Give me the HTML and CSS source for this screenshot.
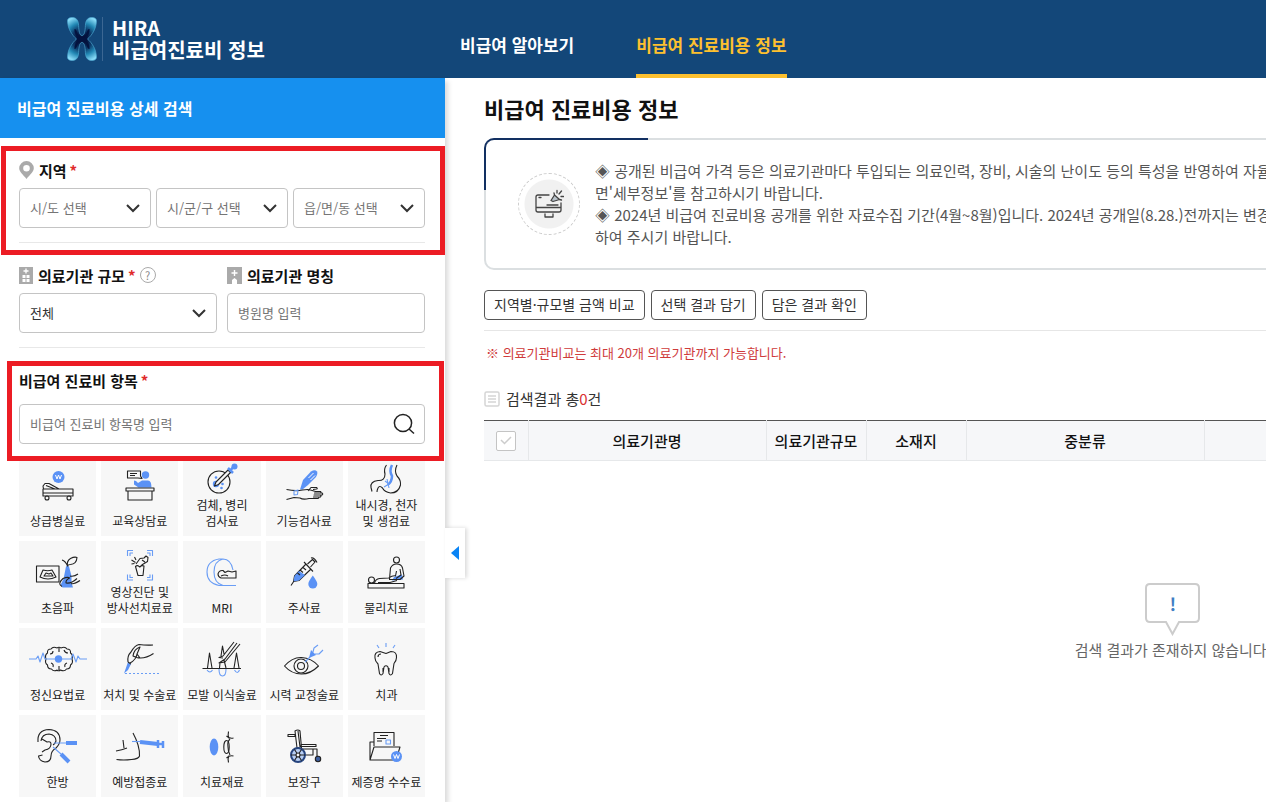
FILE: index.html
```html
<!DOCTYPE html>
<html lang="ko">
<head>
    <meta charset="UTF-8">
    <meta name="viewport" content="width=device-width, initial-scale=1.0">
    <title>비급여 진료비용 정보</title>
    <link rel="stylesheet" href="styles.css">
</head>
<body>
    <header class="header">
        <a class="brand" href="#">
            <svg class="brand-mark" width="30" height="44" viewBox="0 0 30 44" aria-hidden="true">
                <defs>
                    <radialGradient id="mark" gradientUnits="userSpaceOnUse" cx="15" cy="22" r="23">
                        <stop offset="0.2" stop-color="#04133f"/>
                        <stop offset="0.45" stop-color="#0d3a6a"/>
                        <stop offset="0.7" stop-color="#2187b4"/>
                        <stop offset="1" stop-color="#8adcf8"/>
                    </radialGradient>
                </defs>
                <path fill="url(#mark)" stroke="#4aa5cf" stroke-width="0.700" d="M.6 5C0 1 3 .4 6 .6c4 .4 5.400 3.400 5.600 8 .2 5 .8 10 3.400 10s3.200-5 3.400-10c.2-4.600 1.600-7.600 5.600-8 3-.2 6 .4 5.400 4.400C29 12 25 18 20.500 22c4.500 4 8.500 10 8.900 17 .6 4-2.400 4.600-5.400 4.400-4-.4-5.400-3.400-5.600-8-.2-5-.8-10-3.400-10s-3.200 5-3.400 10c-.2 4.600-1.600 7.600-5.600 8-3 .2-6-.4-5.400-4.400C1 32 5 26 9.500 22 5 18 1 12 .6 5z"/>
                <path fill="#04133f" d="M7.500 12c2-.5 3 5 5 8.500h5c2-3.500 3-9 5-8.500.5 3.500-1.500 7-4 10 2.500 3 4.500 6.500 4 10-2 .5-3-5-5-8.500h-5c-2 3.500-3 9-5 8.500-.5-3.500 1.500-7 4-10-2.500-3-4.500-6.500-4-10z"/>
            </svg>
            <span class="brand-name">HIRA<br>비급여진료비 정보</span>
        </a>
        <nav class="nav">
            <a class="nav-link" href="#">비급여 알아보기</a>
            <a class="nav-link active" href="#">비급여 진료비용 정보</a>
        </nav>
    </header>

    <div class="layout">
        <aside class="sidebar">
            <h2 class="sidebar-title">비급여 진료비용 상세 검색</h2>
            <form class="search-form">
                <div class="group">
                    <div class="label-row">
                        <svg class="label-icon" width="15" height="18" viewBox="0 0 15 18"><path fill="#aaa" fill-rule="evenodd" d="M7.500 0A7.300 7.300 0 0 0 .2 7.300C.2 11 4 13.500 7.500 18c3.500-4.500 7.300-7 7.300-10.700A7.300 7.300 0 0 0 7.500 0zm0 4a3.300 3.300 0 1 1 0 6.600 3.300 3.300 0 0 1 0-6.600z"/></svg>
                        <label for="sido">지역</label><span class="required">*</span>
                    </div>
                    <div class="fields fields-3">
                        <select id="sido"><option>시/도 선택</option></select>
                        <select id="sigungu" aria-label="시/군/구"><option>시/군/구 선택</option></select>
                        <select id="dong" aria-label="읍/면/동"><option>읍/면/동 선택</option></select>
                    </div>
                </div>

                <div class="group fields fields-2">
                    <div>
                        <div class="label-row">
                            <svg class="label-icon" width="14" height="17" viewBox="0 0 14 17"><path fill="#aaa" d="M0 0h14v17H0z"/><path stroke="#fff" stroke-width="1.300" d="M7 1.500v5M4.500 4h5"/><path fill="#fff" d="M3.500 8h3v3h-3zm4 0h3v3h-3zm-4 4h3v3h-3zm4 0h3v3h-3z"/></svg>
                            <label for="size">의료기관 규모</label><span class="required">*</span>
                            <button class="help" type="button" aria-label="도움말">?</button>
                        </div>
                        <select id="size" class="filled"><option>전체</option></select>
                    </div>
                    <div>
                        <div class="label-row">
                            <svg class="label-icon" width="15" height="17" viewBox="0 0 15 17"><path fill="#aaa" d="M0 0h15v17h-5v-4l-2.500-2L5 13v4H0z"/><path stroke="#fff" stroke-width="1.400" d="M7.500 3v6M4.500 6h6"/></svg>
                            <label for="hospital">의료기관 명칭</label>
                        </div>
                        <input id="hospital" type="text" placeholder="병원명 입력">
                    </div>
                </div>

                <div class="group group-item">
                    <div class="label-row">
                        <label for="item">비급여 진료비 항목</label><span class="required">*</span>
                    </div>
                    <div class="search-box">
                        <input id="item" type="text" placeholder="비급여 진료비 항목명 입력">
                        <button class="search-button" type="submit" aria-label="검색">
                            <svg width="22" height="22" viewBox="0 0 22 22" fill="none" stroke="#222" stroke-width="1.500"><circle cx="10" cy="10" r="8.600"/><path d="M16 16l5 4.500"/></svg>
                        </button>
                    </div>
                </div>
            </form>

            <div class="tiles">
                <button class="tile" type="button">
                    <svg class="icon" viewBox="0 0 60 36"><circle class="blue" cx="30.500" cy="12" r="6"/><path class="white-line" d="M27.500 10l1.500 4 1.500-4 1.500 4 1.500-4"/><path d="M15 24h30v7H15zM15 28h30M15.500 24l-.5-3 2-2.500h4l10 5.500M18 20.500l9 3.500"/><circle cx="19" cy="33" r="2"/><circle cx="41" cy="33" r="2"/></svg>
                    <span>상급병실료</span>
                </button>
                <button class="tile" type="button">
                    <svg class="icon" viewBox="0 0 60 36"><circle class="blue" cx="35.500" cy="10" r="3.700"/><path class="blue" d="M24 15.500l2 .5 2 2 4-2.500h6q3.500 0 3.500 7h-13l-4.500-3z"/><path d="M17.500 6h13v5l1.500 2.500-4-.5H17.500zM20 8.500h7M20 10.500h5M16 23h28v3H16zM18 26v9h24v-9"/></svg>
                    <span>교육상담료</span>
                </button>
                <button class="tile two-line" type="button">
                    <svg class="icon" viewBox="0 0 60 36"><circle cx="27" cy="23" r="11"/><circle class="blue" cx="24" cy="25" r="3.200"/><circle class="blue" cx="24" cy="18.500" r="1.300"/><circle class="blue" cx="30.500" cy="25" r="1.300"/><circle class="blue" cx="29.500" cy="29" r="1.300"/><path class="paper" d="M22.500 27L24 23l12-12 2.500 2.500-12 12z"/><path class="blue-thick" d="M36 9l5 5M38.500 11.500l3-4"/><circle class="blue" cx="42.500" cy="7.500" r="3"/></svg>
                    <span>검체, 병리<br>검사료</span>
                </button>
                <button class="tile" type="button">
                    <svg class="icon" viewBox="0 0 60 36"><path class="blue" d="M26 24.500l3-9.500 8-8.500q4-2.500 6 0 1 2-1 5.500L34 20l-5.500 4.500z"/><path class="white-line" d="M34.500 13l5-5M36.500 15l4.500-4.500"/><path d="M12.500 24.500q9 2 16 .5 6-1 8 0l5 1.500h5q1 1 0 1.500h-6 7.500q1.500 1 0 2h-8 6.500q1 1 0 2h-7 5q1 1-.5 1.500h-9q-6 1.500-9-.5l-6-.5-7.500 2M34 26l3-3.500h5.500q1.500 1 0 1.500l-3.500.5"/><path class="blue-line" d="M20 26l4-1-.5 4.500-3.500.5z"/></svg>
                    <span>기능검사료</span>
                </button>
                <button class="tile two-line" type="button">
                    <svg class="icon" viewBox="0 0 60 36"><path d="M30.500 6q-3 4-1.500 9 0 7-7 6.500-8 1-7 7l1 4M41 6q-3 6 0 11 4 4 3.500 9-2 8-10 8-6-1-8-5-3-3-4.500 0-1 2-1 4"/><path class="blue-thick" d="M36 6q-3 6 0 11 0 6-4.500 9"/><path class="blue-line" d="M29 22l4 3-5 3M31 20l2 9"/></svg>
                    <span>내시경, 천자<br>및 생검료</span>
                </button>

                <button class="tile" type="button">
                    <svg class="icon" viewBox="0 0 60 36"><path d="M8.500 14H31v16H8.500zM15 18q5 1.500 9 0l4 7q-8 4-16 0zM16 24l2-3 3 1 2-1 2 3z"/><path class="blue" d="M38 14.500q1.500-1.500 3 0l2.500 9.500v7l1.500 4.500H34.500L32.500 33l3-6z"/><path d="M39.500 14q-1-5 3-7.500 4-2 6.500-1-.5 6.500-6.500 7-3 0-3 2M39.500 14q-2-5-5.500-6M34 34.500q-5-2.500 1-8 5-2 6.500-.5-4 2-3.500 5 5 1 11-4.500M43 31.500q3 1 9-3M42 24q4 1 8-2"/></svg>
                    <span>초음파</span>
                </button>
                <button class="tile two-line" type="button">
                    <svg class="icon" viewBox="0 0 60 36"><path class="blue-line" d="M23 4.500h-5.500V10M37 4.500h5.500V10M23 34h-5.500v-5.500M37 34h5.500v-5.500M20 10V7h3M40 10V7h-3M20 28.500v3h3M40 28.500v3h-3"/><path d="M25.500 20.500q2-2 4 .5 2-2 4.500-1l-1 9.500h-5zM26 18l4-5.500 4-.5 2-2 2 1.500-.5 4-5 3-2.500 2.500M32 14l3 2M21.500 14l4 2.500M24.500 11l1.500 3M21.500 18l3-.5"/></svg>
                    <span>영상진단 및<br>방사선치료료</span>
                </button>
                <button class="tile" type="button">
                    <svg class="icon" viewBox="0 0 60 36"><path class="blue-line" d="M41 18Q39 7 31 7h-4q-12 2-12 13t12 13.500h17M31 7q-9 2-9 13t9 13.500"/><path class="paper" d="M44 19v7H29q-3-1-3-4 1-4 5-3.500l2 2 3-1.500 4 1z"/><path d="M29 24q4-2 7 0"/></svg>
                    <span>MRI</span>
                </button>
                <button class="tile" type="button">
                    <svg class="icon" viewBox="0 0 60 36"><path class="paper" d="M33.500 12l5-4.500 2.500 2.500-4.500 5M37 6q3-1 6 4.500M30 10l9 9.500M32 12L20.500 24l-1 5.500 5.500-1L37 17"/><path class="blue" d="M25 19l6 4-6 5.500-5.500 1 1-5.500z"/><path d="M20 29l-3 4.500M26 18l3 2.500M23.500 21l2.500 2M29 15.500l3 2.500"/><path class="blue" d="M38.800 23.500q4.500 6 4.500 8.500a4.500 4.500 0 0 1-9 0q0-2.500 4.500-8.500z"/></svg>
                    <span>주사료</span>
                </button>
                <button class="tile" type="button">
                    <svg class="icon" viewBox="0 0 60 36"><path d="M12 31.500h36V36H12z"/><circle cx="15.500" cy="28" r="3"/><circle cx="40.500" cy="8" r="3"/><path class="blue" d="M38 25l8-2.500 1 5-11 1z"/><path d="M18.500 31q1-4 5-4.500l9-.5q5-3 7-2l1-5M33.500 27l1-11q2-4 6-4 5 0 6 4l1.500 8-4 3.500H33M44 17l1 6-5 3.500M22 30.500h12l7-2"/></svg>
                    <span>물리치료</span>
                </button>

                <button class="tile" type="button">
                    <svg class="icon" viewBox="0 0 60 36"><path d="M29 9q-4-2-6 1-4 0-3.500 4-3 2-1.500 6-1.500 4 1.500 6 0 4 4 4 2 3 6 1M33 9q4-2 6 1 4 0 3.500 4 3 2 1.500 6 1.500 4-1.500 6 0 4-4 4-2 3-6 1q-1.500 1.500-4 0M29 9q2-1.500 4 0M25 12q0 3-3 3M36 11q1 3 4 3M25 28q1-3-2-4M37 28q-1-3 2-4M31 9v4M31 27v4"/><path class="blue-line" d="M1 20h7l2-3 2 6 3-9 2 6h26l2-5 3 8 2-6 2 3h7"/><circle class="blue" cx="30.500" cy="20" r="3.700"/></svg>
                    <span>정신요법료</span>
                </button>
                <button class="tile" type="button">
                    <svg class="icon" viewBox="0 0 60 36"><path class="blue" d="M18 23l3 2-3 6-4 3.500z"/><path d="M18 23q-1-6 3-10 4-7 8-7.500 7 1 14 .5M20 24q6-3 7-9l3-7q-6 2-7 9l3.500 1.500q8 2 17-4M27 15l3 4M18 23l3 2"/><path class="blue-line dashed" d="M15 34.500h34"/></svg>
                    <span>처치 및 수술료</span>
                </button>
                <button class="tile" type="button">
                    <svg class="icon" viewBox="0 0 60 36"><path d="M10.500 29.500H49M15.500 29l2-15 2.500 15M27.500 29l.5-5M29 17l1.500-10 1.500 8M32 21l2 8M42 29l2.500-15L47 29M42 3L31 17l-4 1.500 4 .5M48 5L33 23l-6 1 6-4L45 4"/><path class="blue-line" d="M15 31q3 4 5.500 0M27 30q0 7 3.500 7t3.500-7M42.500 31q3 5 5 0"/></svg>
                    <span>모발 이식술료</span>
                </button>
                <button class="tile" type="button">
                    <svg class="icon" viewBox="0 0 60 36"><path d="M10.500 27q8-9 17-8.500 10 .5 17 8.500-8 8-17 8-10 0-17-8z"/><circle cx="27" cy="27" r="7"/><circle cx="27" cy="27" r="3.500"/><path class="blue-line" d="M31 23l5-5M39 13l1-4 4-3M41 15l4 0 4-4"/><path class="blue" d="M35 19l2-8 5 5z"/></svg>
                    <span>시력 교정술료</span>
                </button>
                <button class="tile" type="button">
                    <svg class="icon" viewBox="0 0 60 36"><path d="M19 19q-1-6 5-6.500l6 2 5-2q6 0 5.500 6 0 3-2.500 6l-1.500 10q-2 3-3.500 0L32 28q-2-2.500-4 0l-1 6.500q-2 3-3.500 0L22 25q-3-3-3-6zM22 18q0-3 3-3M27 29v4M33 29v4"/><path class="blue-line" d="M21 6l2 3M30 4v4M39 6l-2 3"/></svg>
                    <span>치과</span>
                </button>

                <button class="tile" type="button">
                    <svg class="icon" viewBox="0 0 60 36"><path d="M10 16Q9 4 21 3.500 32 4 32 14q0 4-4 8-5 3-5 8 0 6-6 6-6-1-6.500-6l4-1M13 15q1-7 8-7 7 1 7 7-1 3-3 4M14 13l5 3q4-1 4 2 0 5-6 6l-3 2"/><path class="blue-line" d="M26 17h12M25 21l8 7"/><path class="blue-needle" d="M38 17h11M33 28l8 8"/></svg>
                    <span>한방</span>
                </button>
                <button class="tile" type="button">
                    <svg class="icon" viewBox="0 0 60 36"><path d="M23 7q7 13 6.500 23-1 3-8 3.500-8 1-15 0M6 25q6-1 11-3M13 14l1 8"/><path class="blue-line" d="M22 15.500h8"/><path class="blue-needle" d="M30 16l18 2"/><path class="blue-thick" d="M48 14v8M49 18h4M53 15v7"/></svg>
                    <span>예방접종료</span>
                </button>
                <button class="tile" type="button">
                    <svg class="icon" viewBox="0 0 60 36"><ellipse class="blue" cx="22" cy="21" rx="4.300" ry="8.500"/><ellipse cx="34.500" cy="21" rx="2.700" ry="6.500"/><path d="M36.500 5.500q-1 4 .5 7M36.500 36.500q-1-4 .5-7M34.500 10q3 3 7 2M34.500 32q3-3 7-2M38 13q-3 3-2 8 0 4 2 8"/></svg>
                    <span>치료재료</span>
                </button>
                <button class="tile" type="button">
                    <svg class="icon" viewBox="0 0 60 36"><path d="M14 8.500h7v2h-7zM21 5q3-2 5 0l1.500 17H23zM27 18.500h15v2H27zM27 23h16v7l3 2M28 29h11v-6M24 5l2 16"/><circle class="wheel" cx="24" cy="29" r="7"/><path d="M17 29h14M20.500 23.500l7 11M27.500 23.500l-7 11"/><circle class="paper" cx="24" cy="29" r="2"/><circle class="dark-wheel" cx="44" cy="33" r="2.700"/></svg>
                    <span>보장구</span>
                </button>
                <button class="tile" type="button">
                    <svg class="icon" viewBox="0 0 60 36"><path d="M18 20V6.500h20V20M24 9.500h8M21 12.500h9M21 15h5M18 16h-4v18h25M14 34l4-13h26l-4 13"/><path class="blue-line" d="M30 14h4.500v4H30z"/><circle class="blue" cx="40.500" cy="30.500" r="5.500"/><path class="white-line" d="M37.500 28.500l1.500 4 1.500-4 1.500 4 1.500-4"/></svg>
                    <span>제증명 수수료</span>
                </button>
            </div>

            <button class="collapse" type="button" aria-label="검색 영역 닫기"></button>
            <div class="marker marker-region"></div>
            <div class="marker marker-item"></div>
        </aside>

        <main class="content">
            <h1>비급여 진료비용 정보</h1>

            <section class="info">
                <div class="info-icon">
                    <svg width="30" height="30" viewBox="0 0 30 30" fill="none" stroke="#444" stroke-width="1.300" stroke-linejoin="round" stroke-linecap="round"><path d="M15 6H4Q2 6 2 8v13q0 2 2 2h21q2 0 2-2v-7M2 18.500h25M5 8.500h2M13 16h11M11 25v3h8v-3"/><path fill="#b9c3cb" d="M17 11.500l3.500-5.500 5 4.500-6.500 2zM20.500 6l-.5-2M25.500 10.500l2 .5"/><path d="M23 4V1.500M25 5l2.500-3M27 7.500h2.500"/></svg>
                </div>
                <p class="info-text">◈ 공개된 비급여 가격 등은 의료기관마다 투입되는 의료인력, 장비, 시술의 난이도 등의 특성을 반영하여 자율적<br>면'세부정보'를 참고하시기 바랍니다.<br>◈ 2024년 비급여 진료비용 공개를 위한 자료수집 기간(4월~8월)입니다. 2024년 공개일(8.28.)전까지는 변경사<br>하여 주시기 바랍니다.</p>
            </section>

            <div class="actions">
                <button type="button">지역별·규모별 금액 비교</button>
                <button type="button">선택 결과 담기</button>
                <button type="button">담은 결과 확인</button>
            </div>

            <p class="notice">※ 의료기관비교는 최대 20개 의료기관까지 가능합니다.</p>

            <p class="total">
                <svg width="16" height="16" viewBox="0 0 16 16" fill="none" stroke="#d5d5d5" stroke-width="1.500"><rect x="1" y="1" width="14" height="14" rx="1.500"/><path d="M4 5h8M4 8h8M4 11h8"/></svg>
                <span>검색결과 총<em>0</em>건</span>
            </p>

            <table class="results">
                <colgroup>
                    <col class="col-check"><col class="col-wide"><col class="col-narrow"><col class="col-narrow"><col class="col-wide"><col>
                </colgroup>
                <thead>
                    <tr>
                        <th><input type="checkbox" aria-label="전체 선택"></th>
                        <th>의료기관명</th>
                        <th>의료기관규모</th>
                        <th>소재지</th>
                        <th>중분류</th>
                        <th></th>
                    </tr>
                </thead>
                <tbody>
                    <tr>
                        <td class="empty" colspan="6">
                            <div class="bubble">
                                <svg width="55" height="53" viewBox="0 0 55 53" fill="#fff" stroke="#ccc" stroke-width="2"><path d="M5 1h45q4 0 4 4v30q0 4-4 4H34l-6.500 12L21 39H5q-4 0-4-4V5q0-4 4-4z"/></svg>
                                <b>!</b>
                            </div>
                            검색 결과가 존재하지 않습니다.
                        </td>
                    </tr>
                </tbody>
            </table>
        </main>
    </div>
</body>
</html>
```
FILE: styles.css
```css
* {
    box-sizing: border-box;
}
body {
    margin: 0;
    min-height: 100vh;
    display: flex;
    flex-direction: column;
    overflow: hidden;
    background: #fff;
    color: #333;
    font-family: "Noto Sans CJK KR", "Noto Sans", sans-serif;
    font-size: 15px;
}
h1, h2, p {
    margin: 0;
}
a {
    color: inherit;
    text-decoration: none;
}
button, input, select {
    font-family: inherit;
    margin: 0;
}

/* header */
.header {
    display: flex;
    height: 78px;
    padding-left: 67px;
    background: #134779;
    color: #fff;
}
.brand {
    display: flex;
    align-items: center;
    min-width: 393px;
}
.brand-name {
    margin-left: 5px;
    padding-left: 9px;
    border-left: 1px solid #3c6793;
    font-size: 20px;
    font-weight: 700;
    line-height: 22px;
}
.nav {
    display: flex;
    gap: 62px;
}
.nav-link {
    display: flex;
    align-items: center;
    padding-top: 18px;
    border-bottom: 4px solid transparent;
    padding-bottom: 4px;
    font-size: 17px;
    font-weight: 700;
    white-space: nowrap;
}
.nav-link.active {
    color: #fdc02f;
    border-bottom-color: #fdc02f;
}

.layout {
    display: flex;
    flex: 1;
}

/* sidebar */
.sidebar {
    position: relative;
    flex: 0 0 445px;
    background: #fff;
    box-shadow: 3px 3px 5px rgba(0, 0, 0, 0.15);
}
.sidebar-title {
    height: 60px;
    padding-left: 17px;
    background: #1690ef;
    color: #fff;
    font-size: 16px;
    font-weight: 700;
    line-height: 60px;
}
.search-form {
    padding: 0 20px 0 19px;
}
.group {
    padding: 20px 0 14px;
    border-bottom: 1px solid #e8e8e8;
}
.label-row {
    display: flex;
    align-items: center;
    height: 24px;
    margin-bottom: 6px;
    color: #111;
    font-size: 15px;
    font-weight: 700;
}
.label-icon {
    margin-right: 5px;
}
.required {
    margin-left: 3px;
    color: #e02b2b;
}
.help {
    width: 16px;
    height: 16px;
    margin-left: 4px;
    padding: 0;
    border: 1px solid #aaa;
    border-radius: 50%;
    background: #fff;
    color: #888;
    font-size: 11px;
    line-height: 14px;
}
.fields {
    display: grid;
}
.fields-3 {
    grid-template-columns: repeat(3, 1fr);
    gap: 5px;
}
.fields-2 {
    grid-template-columns: repeat(2, 1fr);
    gap: 10px;
}
select,
input[type="text"] {
    width: 100%;
    height: 40px;
    padding: 0 10px 2px;
    border: 1px solid #c4c4c4;
    border-radius: 4px;
    background-color: #fff;
    color: #757575;
    font-size: 13px;
}
input::placeholder {
    color: #757575;
}
select {
    appearance: none;
    background-image: url("data:image/svg+xml,%3Csvg xmlns='http://www.w3.org/2000/svg' width='14' height='9' fill='none' stroke='%23333' stroke-width='2'%3E%3Cpath d='M1 1l6 6 6-6'/%3E%3C/svg%3E");
    background-repeat: no-repeat;
    background-position: right 10px center;
}
select.filled {
    color: #333;
}
.group-item {
    padding-bottom: 17px;
    border-bottom: 0;
}
.group-item .label-row {
    margin-bottom: 12px;
}
.search-box {
    position: relative;
}
.search-button {
    position: absolute;
    top: 9px;
    right: 10px;
    width: 22px;
    height: 22px;
    padding: 0;
    border: 0;
    background: none;
}

/* category tiles */
.tiles {
    display: grid;
    grid-template-columns: repeat(5, 1fr);
    grid-template-rows: 75px;
    grid-auto-rows: 82px;
    gap: 5px;
    padding: 0 20px 0 19px;
}
.tile {
    display: flex;
    flex-direction: column;
    align-items: center;
    justify-content: flex-end;
    gap: 12px;
    min-width: 0;
    padding: 0 0 7px;
    border: 0;
    background: #f7f7f7;
    color: #222;
    font-size: 12px;
    line-height: 16px;
    white-space: nowrap;
}
.tile.two-line {
    gap: 2px;
}
.icon {
    flex: none;
    width: 60px;
    height: 36px;
    overflow: visible;
    fill: none;
    stroke: #222;
    stroke-width: 1.1;
    stroke-linejoin: round;
}
.icon .blue {
    fill: #5b92f5;
    stroke: none;
}
.icon .blue-line {
    stroke: #6a9df5;
}
.icon .blue-thick {
    stroke: #5b92f5;
    stroke-width: 2.5;
}
.icon .blue-needle {
    stroke: #5b92f5;
    stroke-width: 4;
}
.icon .white-line {
    stroke: #fff;
    stroke-width: 1;
}
.icon .dashed {
    stroke-dasharray: 2 2;
}
.icon .paper {
    fill: #f7f7f7;
}
.icon .wheel {
    fill: #b9d0f5;
    stroke: #27457f;
    stroke-width: 2;
}
.icon .dark-wheel {
    fill: #3e5f9e;
}

.collapse {
    position: absolute;
    top: 450px;
    left: 100%;
    width: 20px;
    height: 50px;
    padding: 0 0 0 6px;
    border: 0;
    background: #fff;
    box-shadow: 2px 0 4px rgba(0, 0, 0, 0.15);
}
.collapse::before {
    content: "";
    display: block;
    width: 0;
    border: 7px solid transparent;
    border-right: 8px solid #0a84f5;
    border-left: 0;
}

/* highlight frames over the required fields */
.marker {
    position: absolute;
    border: 5px solid #ec1c24;
    pointer-events: none;
}
.marker-region {
    top: 68px;
    left: 1px;
    right: 0;
    height: 109px;
}
.marker-item {
    top: 283px;
    left: 7px;
    right: 1px;
    height: 100px;
}

/* content */
.content {
    flex: 1 0 1457px;
    min-width: 0;
    padding: 14px 40px 0 39px;
}
h1 {
    color: #111;
    font-size: 22px;
    font-weight: 700;
    line-height: 32px;
}
.info {
    position: relative;
    display: flex;
    align-items: center;
    gap: 15px;
    margin-top: 14px;
    padding: 20px 32px;
    border: 2px solid #dbdfe1;
    border-radius: 10px;
}
.info::before {
    content: "";
    position: absolute;
    top: -2px;
    left: -2px;
    width: 162px;
    height: 50px;
    border-top: 2px solid #123062;
    border-left: 2px solid #123062;
    border-top-left-radius: 10px;
}
.info-icon {
    display: flex;
    flex: none;
    align-items: center;
    justify-content: center;
    width: 62px;
    height: 62px;
    border: 1px dashed #ccc;
    border-radius: 50%;
    background: radial-gradient(circle, #f1f1f1 24px, #fff 25px);
}
.info-text {
    color: #555;
    line-height: 22px;
    white-space: nowrap;
}
.actions {
    display: flex;
    gap: 6px;
    padding: 20px 0 10px;
    border-bottom: 1px solid #e6e6e6;
}
.actions button {
    height: 30px;
    padding: 0 9px 2px;
    border: 1px solid #555;
    border-radius: 4px;
    background: #fff;
    color: #333;
    font-size: 14px;
    line-height: 20px;
}
.notice {
    margin-top: 12px;
    padding-left: 2px;
    color: #cf3b3b;
    font-size: 13px;
    line-height: 20px;
}
.total {
    display: flex;
    align-items: center;
    gap: 6px;
    margin: 25px 0 10px;
    line-height: 22px;
}
.total em {
    color: #d93030;
    font-style: normal;
}

.results {
    width: 100%;
    border-collapse: collapse;
    table-layout: fixed;
    border-top: 1px solid #555;
}
.col-check {
    width: 44px;
}
.col-wide {
    width: 238px;
}
.col-narrow {
    width: 100px;
}
.results th {
    height: 40px;
    padding: 0;
    border-right: 1px solid #e6e8ea;
    border-bottom: 1px solid #e6e8ea;
    background: #f6f7f9;
    color: #111;
    font-size: 15px;
    font-weight: 500;
}
.results input {
    appearance: none;
    display: block;
    width: 20px;
    height: 20px;
    margin: 0 auto;
    border: 1px solid #c4c4c4;
    border-radius: 2px;
    background: #fff url("data:image/svg+xml,%3Csvg xmlns='http://www.w3.org/2000/svg' width='12' height='9' fill='none' stroke='%23ccc' stroke-width='1.500'%3E%3Cpath d='M1 4l3.500 3.500L11 1'/%3E%3C/svg%3E") no-repeat center;
}
.empty {
    padding: 122px 0 0;
    color: #666;
    font-size: 15px;
    line-height: 22px;
    text-align: center;
}
.bubble {
    display: grid;
    justify-content: center;
    justify-items: center;
    margin-bottom: 3px;
}
.bubble svg,
.bubble b {
    grid-area: 1 / 1;
}
.bubble b {
    color: #3f7fc4;
    font-size: 18px;
    line-height: 40px;
}
```
